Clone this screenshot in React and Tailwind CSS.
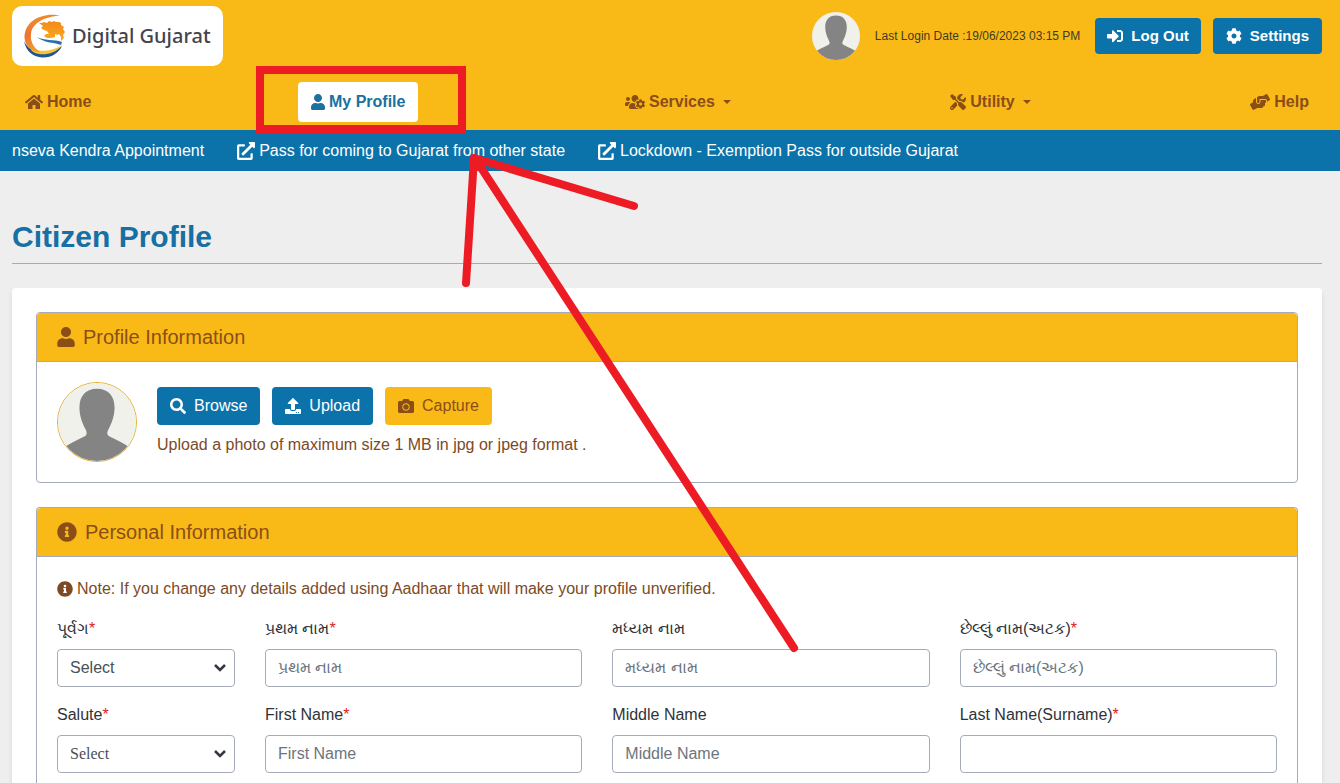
import React from 'react';
import {
  FaHome,
  FaUser,
  FaUsersCog,
  FaTools,
  FaHandsHelping,
  FaSignInAlt,
  FaCog,
  FaSearch,
  FaUpload,
  FaCamera,
  FaInfoCircle,
  FaExternalLinkAlt,
} from 'react-icons/fa';

const navItems = [
  { label: 'Home', icon: FaHome, iconClass: 'h-4 w-[18px]' },
  { label: 'My Profile', icon: FaUser, iconClass: 'h-4 w-[14px]', active: true },
  { label: 'Services', icon: FaUsersCog, iconClass: 'h-4 w-5', dropdown: true },
  { label: 'Utility', icon: FaTools, iconClass: 'h-4 w-4', dropdown: true },
  { label: 'Help', icon: FaHandsHelping, iconClass: 'h-4 w-5' },
];

const newsItems = [
  'Pass for coming to Gujarat from other state',
  'Lockdown - Exemption Pass for outside Gujarat',
];

const fields = [
  { id: 'salute-gu', label: 'પૂર્વગ', required: true, select: true },
  { id: 'first-gu', label: 'પ્રથમ નામ', required: true, placeholder: 'પ્રથમ નામ' },
  { id: 'middle-gu', label: 'મધ્યમ નામ', placeholder: 'મધ્યમ નામ' },
  { id: 'last-gu', label: 'છેલ્લું નામ(અટક)', required: true, placeholder: 'છેલ્લું નામ(અટક)' },
  { id: 'salute', label: 'Salute', required: true, select: true, serif: true },
  { id: 'first', label: 'First Name', required: true, placeholder: 'First Name' },
  { id: 'middle', label: 'Middle Name', placeholder: 'Middle Name' },
  { id: 'last', label: 'Last Name(Surname)', required: true },
];

const Logo = () => (
  <a href="#" className="flex h-[60px] items-center rounded-[10px] bg-white px-3">
    <svg viewBox="0 0 42 44" className="h-11 w-[42px]" aria-hidden="true">
      <defs>
        <linearGradient id="swirl" x1="0" y1="0" x2="0.4" y2="1">
          <stop offset="0" stopColor="#f39a2c" />
          <stop offset="0.5" stopColor="#ec7430" />
          <stop offset="1" stopColor="#f5a52e" />
        </linearGradient>
        <linearGradient id="lion" x1="0" y1="0" x2="0" y2="1">
          <stop offset="0" stopColor="#f28a1e" />
          <stop offset="1" stopColor="#fbaa1c" />
        </linearGradient>
      </defs>
      <path d="M0 27C2 38 10 43 18 43.500C27 44 35 39 38 32C31 38 23 40 15 39C8 37 3 33 0 27Z" fill="#1f5793" />
      <path d="M6 32C12 39 28 38 38 31C31 40 22 41 15 40C9 39 6 36 6 32Z" fill="#f7c331" />
      <path d="M36 1.500C24-1.500 1 3 0.500 23C0.500 32 8 38 17 38.500C10 34 6 28 7 20C8 9 20 3 36 1.500Z" fill="url(#swirl)" />
      <path
        d="M15 9L18 9L20 8L23 9L25 7L28 8L30 7L32 8L35 8L37 9L37 11L40 13L39 15L41 18L39 21L40 24L37 27L37 23L35 20L33 21L31 20L31 23L27 24L23 24L20 22L22 20L25 20L23 17L20 16L17 14L19 12Z"
        fill="url(#lion)"
      />
      <path d="M13 23C20 27 30 25 38 28L37 31C29 28 20 29 13 23Z" fill="#2c6cab" />
    </svg>
    <span className="ml-[6px] font-['Noto_Sans',sans-serif] text-xl font-medium text-[#44444f]">Digital Gujarat</span>
  </a>
);

const Avatar = ({ className }) => (
  <svg viewBox="0 0 80 80" className={className} role="img" aria-label="Profile photo">
    <rect width="80" height="80" fill="#f1f1ec" />
    <path
      d="M40 6C28 6 22 14 22 25C22 34 25 41 28 47C31 53 29 54 25 56C19 59 12 62 0 70V80H80V70C68 62 61 59 55 56C51 54 49 53 52 47C55 41 58 34 58 25C58 14 52 6 40 6Z"
      fill="#848484"
    />
  </svg>
);

const Header = () => (
  <header className="bg-[#f9ba18] pl-3 pr-[18px] pb-2">
    <div className="flex items-center justify-between pt-[6px]">
      <Logo />
      <div className="flex items-center">
        <Avatar className="h-12 w-12 rounded-full" />
        <span className="mx-[15px] text-xs text-[#3f3a22]">Last Login Date :19/06/2023 03:15 PM</span>
        <button className="mr-3 flex h-9 items-center gap-2 rounded bg-[#0b73aa] px-3 text-[15px] font-bold text-white">
          <FaSignInAlt className="h-4 w-4" /> Log Out
        </button>
        <button className="flex h-9 items-center gap-2 rounded bg-[#0b73aa] px-[13px] text-[15px] font-bold text-white">
          <FaCog className="h-4 w-4" /> Settings
        </button>
      </div>
    </div>
    <nav className="mt-4 flex justify-between">
      {navItems.map(({ label, icon: Icon, iconClass, active, dropdown }) => (
        <a
          key={label}
          href="#"
          className={`flex h-10 items-center gap-1 rounded px-[13px] font-bold ${
            active ? 'bg-white text-[#1b709f]' : 'text-[#8b4e17]'
          }`}
        >
          <Icon className={iconClass} />
          {label}
          {dropdown && (
            <span className="ml-1 border-x-4 border-t-4 border-x-transparent border-t-[#8b4e17]" />
          )}
        </a>
      ))}
    </nav>
  </header>
);

const NewsTicker = () => (
  <div className="flex h-[41px] items-center gap-[33px] overflow-hidden whitespace-nowrap bg-[#0b73aa] pl-3 text-white">
    <a href="#">nseva Kendra Appointment</a>
    {newsItems.map((item) => (
      <a key={item} href="#" className="flex items-center gap-1">
        <FaExternalLinkAlt className="h-[18px] w-[18px]" /> {item}
      </a>
    ))}
  </div>
);

const Panel = ({ title, icon: Icon, iconClass, className, children }) => (
  <section className={`border-[#a5abb8] ${className}`}>
    <h2 className="flex h-[49px] items-center gap-2 rounded-t border-b border-[#a5abb8] bg-[#f9ba18] px-5 text-xl text-[#8b4e17]">
      <Icon className={iconClass} /> {title}
    </h2>
    <div className="p-5">{children}</div>
  </section>
);

const Field = ({ id, label, required, select, serif, placeholder }) => (
  <div>
    <label htmlFor={id} className="mb-2 block h-6 leading-6 text-[#2f3338]">
      {label}
      {required && <span className="text-[#e02020]">*</span>}
    </label>
    {select ? (
      <div className="relative">
        <select
          id={id}
          className={`h-[38px] w-full appearance-none rounded border border-[#a5abb8] bg-white px-3 text-[#495057] ${
            serif ? "font-['Liberation_Serif',serif]" : ''
          }`}
        >
          <option>Select</option>
        </select>
        <svg viewBox="0 0 12 8" className="pointer-events-none absolute right-[9px] top-[15px] h-2 w-3">
          <path d="M1 1L6 6L11 1" fill="none" stroke="#343a40" strokeWidth="2.600" />
        </svg>
      </div>
    ) : (
      <input
        id={id}
        type="text"
        placeholder={placeholder}
        className="h-[38px] w-full rounded border border-[#a5abb8] bg-white px-3 placeholder:text-[#6c757d]"
      />
    )}
  </div>
);

// Hand drawn pointer towards the "My Profile" menu entry
const Annotation = () => (
  <svg
    className="pointer-events-none absolute left-0 top-0 h-[783px] w-[1340px]"
    viewBox="0 0 1340 783"
    fill="none"
    stroke="#ed1c24"
    strokeWidth="8"
    aria-hidden="true"
  >
    <rect x="260" y="70" width="202" height="59" />
    <path d="M794 648L476 160M466 283L474 158L634 206" strokeLinecap="round" strokeLinejoin="round" />
  </svg>
);

const App = () => {
  return (
    <div className="relative flex min-h-screen flex-col overflow-hidden bg-[#eeeeee] font-['Liberation_Sans',Arial,sans-serif] text-base">
      <Header />
      <NewsTicker />
      <main className="flex flex-1 flex-col pl-3 pr-[18px]">
        <h1 className="mb-6 mt-12 border-b border-[#a5abb8] pb-2 text-3xl font-bold text-[#1670a4]">
          Citizen Profile
        </h1>
        <div className="flex flex-1 flex-col rounded-t bg-white px-6 pt-6 shadow-md">
          <Panel
            title="Profile Information"
            icon={FaUser}
            iconClass="h-5 w-[18px]"
            className="mb-6 rounded border"
          >
            <div className="flex gap-5">
              <Avatar className="h-20 w-20 rounded-full border border-[#e5b030]" />
              <div className="pt-[5px]">
                <div className="flex gap-3">
                  <button className="flex h-[38px] items-center gap-2 rounded bg-[#0b73aa] px-[13px] text-white">
                    <FaSearch /> Browse
                  </button>
                  <button className="flex h-[38px] items-center gap-2 rounded bg-[#0b73aa] px-[13px] text-white">
                    <FaUpload /> Upload
                  </button>
                  <button className="flex h-[38px] items-center gap-2 rounded bg-[#f9ba18] px-[13px] text-[#8b4e17]">
                    <FaCamera /> Capture
                  </button>
                </div>
                <p className="mt-2 text-[#7d4a26]">
                  Upload a photo of maximum size 1 MB in jpg or jpeg format .
                </p>
              </div>
            </div>
          </Panel>
          <Panel
            title="Personal Information"
            icon={FaInfoCircle}
            iconClass="h-5 w-5"
            className="flex-1 rounded-t border border-b-0"
          >
            <p className="mb-4 flex items-center gap-1 text-[#7d4a26]">
              <FaInfoCircle /> Note: If you change any details added using Aadhaar that will make your profile
              unverified.
            </p>
            <form className="-mb-3 grid grid-cols-[178px_1fr_1fr_1fr] gap-x-[30px] gap-y-4">
              {fields.map((field) => (
                <Field key={field.id} {...field} />
              ))}
            </form>
          </Panel>
        </div>
      </main>
      <Annotation />
    </div>
  );
};

export default App;
